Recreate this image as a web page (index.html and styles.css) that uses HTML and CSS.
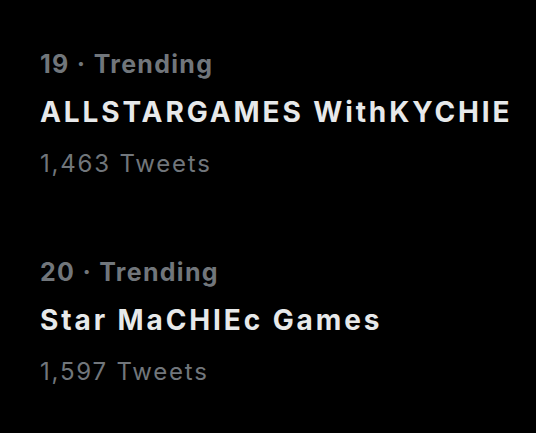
FILE: index.html
```html
<!DOCTYPE html>
<html>
<head>
    <meta charset="UTF-8">
    <title>Trending</title>
    <link rel="stylesheet" href="styles.css">
</head>
<body>
    <div class="trend-list">
        <div class="trend">
            <div class="trend-meta">19 · Trending</div>
            <div class="trend-name">ALLSTARGAMES WithKYCHIE</div>
            <div class="trend-count">1,463 Tweets</div>
        </div>
        <div class="trend">
            <div class="trend-meta">20 · Trending</div>
            <div class="trend-name">Star MaCHIEc Games</div>
            <div class="trend-count">1,597 Tweets</div>
        </div>
    </div>
</body>
</html>
```

FILE: styles.css
```css
html, body {
    margin: 0;
    padding: 0;
    background: #000;
}

body {
    font-family: Inter, "Liberation Sans", sans-serif;
    color: #e7e9ea;
}

.trend-list {
    display: flex;
    flex-direction: column;
    gap: 68px;
    padding: 44px 0 0 40px;
}

.trend {
    display: flex;
    flex-direction: column;
    white-space: nowrap;
}

.trend-meta {
    font-size: 25px;
    font-weight: bold;
    line-height: 40px;
    letter-spacing: 1.3px;
    color: #71767b;
}

.trend-name {
    margin-top: 3px;
    font-size: 28px;
    font-weight: bold;
    line-height: 50px;
    letter-spacing: 2.9px;
    color: #e7e9ea;
}

.trend-count {
    margin-top: 7px;
    font-size: 24px;
    line-height: 40px;
    letter-spacing: 1.8px;
    color: #71767b;
}
```
